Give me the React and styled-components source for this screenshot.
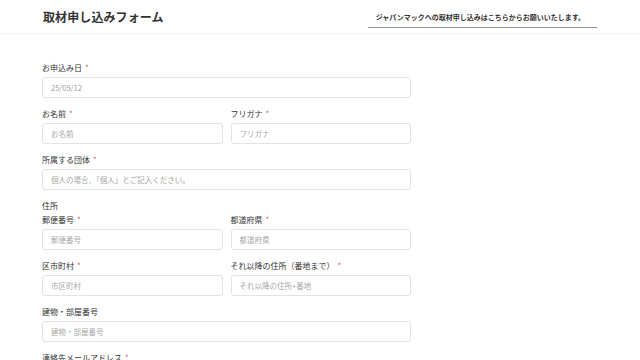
import React from "react";
import styled, { createGlobalStyle } from "styled-components";

const GlobalStyle = createGlobalStyle`
  body {
    margin: 0;
    background: #ffffff;
    font-family: "Noto Sans CJK JP", "Noto Sans", sans-serif;
    color: #333333;
  }
`;

const Header = styled.header`
  display: flex;
  justify-content: space-between;
  align-items: center;
  height: 33px;
  padding: 0 43px 0 43px;
  border-bottom: 1px solid #f3f3f3;
`;

const Titulo = styled.h1`
  margin: 0;
  font-size: 12px;
  font-weight: 700;
  color: #333333;
  letter-spacing: 0.1px;
`;

const Aviso = styled.div`
  align-self: flex-start;
  margin-top: 11px;
  padding: 0 12px 3px 8px;
  border-bottom: 1px solid #8f979c;
  font-size: 7px;
  font-weight: 700;
  color: #333333;
  line-height: 13px;
`;

const Formulario = styled.form`
  display: flex;
  flex-direction: column;
  width: 369px;
  margin: 28px 0 0 42px;
`;

const Linha = styled.div`
  display: grid;
  grid-template-columns: 1fr 1fr;
  gap: 8px;
`;

const Campo = styled.div`
  display: flex;
  flex-direction: column;
  margin-bottom: 10px;
`;

const Rotulo = styled.label`
  font-size: 8px;
  line-height: 12px;
  height: 12px;
  margin-bottom: 3px;
  color: #333333;
`;

const Obrigatorio = styled.span`
  color: #e0575b;
  margin-left: 3px;
`;

const Secao = styled.div`
  font-size: 8px;
  line-height: 12px;
  height: 14px;
  color: #333333;
`;

const Entrada = styled.input`
  box-sizing: border-box;
  width: 100%;
  height: 21px;
  padding: 0 8px;
  border: 1px solid #e3e3e3;
  border-radius: 3px;
  font-family: inherit;
  font-size: 7.5px;
  color: #a0a0a0;
  outline: none;
  &::placeholder {
    color: #a8a8a8;
  }
`;

function CampoForm({ label, required, placeholder, value }) {
  return (
    <Campo>
      <Rotulo>
        {label}
        {required && <Obrigatorio>*</Obrigatorio>}
      </Rotulo>
      <Entrada placeholder={placeholder} defaultValue={value} />
    </Campo>
  );
}

export default function App() {
  return (
    <>
      <GlobalStyle />
      <Header>
        <Titulo>取材申し込みフォーム</Titulo>
        <Aviso>ジャパンマックへの取材申し込みはこちらからお願いいたします。</Aviso>
      </Header>
      <Formulario>
        <CampoForm label="お申込み日" required value="25/05/12" />
        <Linha>
          <CampoForm label="お名前" required placeholder="お名前" />
          <CampoForm label="フリガナ" required placeholder="フリガナ" />
        </Linha>
        <CampoForm
          label="所属する団体"
          required
          placeholder="個人の場合、「個人」とご記入ください。"
        />
        <Secao>住所</Secao>
        <Linha>
          <CampoForm label="郵便番号" required placeholder="郵便番号" />
          <CampoForm label="都道府県" required placeholder="都道府県" />
        </Linha>
        <Linha>
          <CampoForm label="区市町村" required placeholder="市区町村" />
          <CampoForm
            label="それ以降の住所（番地まで）"
            required
            placeholder="それ以降の住所+番地"
          />
        </Linha>
        <CampoForm label="建物・部屋番号" placeholder="建物・部屋番号" />
        <CampoForm label="連絡先メールアドレス" required placeholder="連絡先メールアドレス" />
      </Formulario>
    </>
  );
}
